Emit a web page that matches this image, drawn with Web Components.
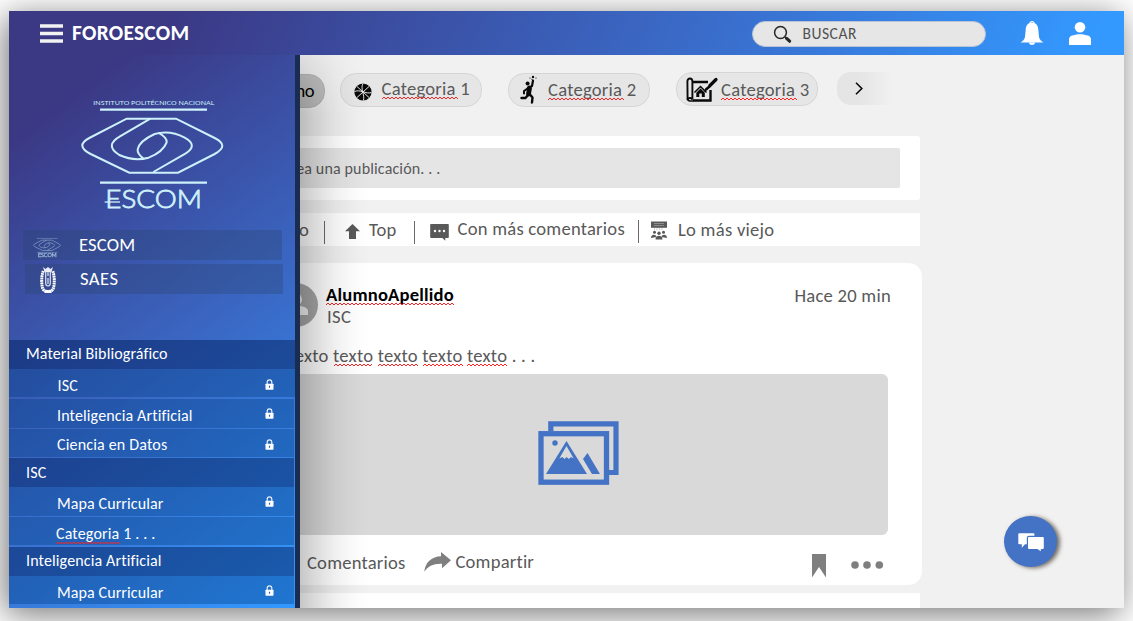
<!DOCTYPE html>
<html lang="es">
<head>
<meta charset="utf-8">
<title>FOROESCOM</title>
<style>
html,body{margin:0;height:100%;overflow:hidden;background:#fff}
body{font-family:Carlito,Calibri,Lato,sans-serif}
</style>
</head>
<body>
<foro-app></foro-app>
<script>
const define=(name,html,init)=>{
  const t=document.createElement('template');t.innerHTML=html;
  customElements.define(name,class extends HTMLElement{
    constructor(){super();this.attachShadow({mode:'open'}).append(t.content.cloneNode(true))}
    connectedCallback(){if(init)init(this,this.shadowRoot)}
  });
};

/* Single line of text fitted to a width (w), with optional spelling marks ("x:width ...") */
define('ui-text',`<style>
:host{display:block;flex:none;position:relative;line-height:20px;height:20px;white-space:pre;font-size:18.600px}
span{display:inline-block}
svg{position:absolute;top:17px;height:4px;overflow:hidden}
</style><span><slot></slot></span>`,(el,r)=>{
  const w=+el.getAttribute('w')-.6,s=r.querySelector('span'),n=el.textContent.length;
  el.style.width=(w+.6)+'px';
  const nat=s.getBoundingClientRect().width;
  s.style.letterSpacing=((w-nat)/n)+'px';
  (el.getAttribute('marks')||'').split(' ').filter(Boolean).forEach(m=>{
    const [x,l]=m.split(':').map(Number);let d='M0 3';
    for(let i=2,k=0;i<=l;i+=2,k++)d+=`L${i} ${k%2?3:1}`;
    r.innerHTML+=`<svg style="left:${x}px;width:${l}px"><path d="${d}" fill="none" stroke="#f22" stroke-width="1"/></svg>`;
  });
});

const ICONS={
menu:['0 0 23 19','<path d="M0 2h23M0 9.5h23M0 17h23" stroke="#f2f2f2" stroke-width="3.4"/>'],
search:['0 0 17 17','<circle cx="6.5" cy="6.5" r="5.9" fill="none" stroke="#262626" stroke-width="1.5"/><path d="M11 11l1.6 1.5" stroke="#262626" stroke-width="1.6"/><path d="M12.6 12.4l3 2.8" stroke="#262626" stroke-width="3.2" stroke-linecap="round"/>'],
bell:['0 0 24 24','<g fill="#fff"><circle cx="12" cy="2.5" r="2" fill="none" stroke="#fff" stroke-width="1.2"/><path d="M12 1.600c4 0 6 3 6.300 7l.7 7.500c.4 2.700 2.500 4.200 4.500 5.400H.500c2-1.200 4.100-2.700 4.500-5.400L5.700 8.600C6 4.600 8 1.600 12 1.600z"/><path d="M9 21.500h6a3 2.300 0 0 1-6 0z"/></g>'],
user:['0 0 22 23','<g fill="#fff"><circle cx="11" cy="5.300" r="5.300"/><path d="M0 23v-5.500c0-1.800 1-3 2.400-3.700C5 12.700 8 12.200 11 12.200s6 .5 8.600 1.600c1.400.7 2.400 1.900 2.400 3.700V23z"/></g>'],
ball:['0 0 18 18','<circle cx="9" cy="9" r="8.600" fill="#0a0a0a"/><path d="M3 3.500l12 11M15 3.500L3 14.500M9 .5C6 6 11 12 9.500 17.500M.500 8.500C6 6 12 11.500 17.500 9.500" fill="none" stroke="#e6e6e6" stroke-width="1"/>'],
volley:['0 0 18 29','<g fill="none" stroke="#0a0a0a" stroke-linecap="round" stroke-linejoin="round"><path d="M7.500 13.500L4 16v2.500" stroke-width="2"/><path d="M8 13l4-2 1-5.500" stroke-width="2.200"/><path d="M9.500 13L8.500 19" stroke-width="4.800"/><path d="M10 19.500l2.500 3-.5 5" stroke-width="2.400"/><path d="M8 20l-2.500 3H1.500" stroke-width="2.400"/></g><g fill="#0a0a0a"><circle cx="7.600" cy="8.600" r="2"/><circle cx="13" cy="2" r="1.200"/><circle cx="10" cy="3" r=".6"/><circle cx="16" cy="3" r=".6"/><circle cx="12" cy="4.300" r=".6"/></g>'],
plan:['0 0 32 26','<path d="M6.500 5H22M24.500 13v10.500H7" fill="none" stroke="#0a0a0a" stroke-width="2.400"/><path d="M1.400 4.500c0-4 5-4 5 0v18c-1-2-4.500-2-4.800.5z" fill="none" stroke="#0a0a0a" stroke-width="1.900"/><path d="M1.500 21.500c0 3 3 2.500 6 2.500" fill="none" stroke="#0a0a0a" stroke-width="1.700"/><path d="M8.500 15.500l6-6 6 6" fill="none" stroke="#0a0a0a" stroke-width="1.500"/><path d="M10.300 15.700l4.200-4.200 4.300 4.200V20h-3v-3.500h-2.500V20h-3z" fill="#0a0a0a"/><path d="M20 12.500l4-3.500" stroke="#0a0a0a" stroke-width="2.500"/><path d="M24 8.500l6-6" stroke="#0a0a0a" stroke-width="3.200" stroke-linecap="round"/><path d="M17 14.300c2 .4 4-.3 4.500-2l-1.500-1.300c-1.300.8-1.300 2.500-3 3.300z" fill="#0a0a0a"/>'],
next:['0 0 8 13','<path d="M1 .8l5.800 5.700L1 12.200" fill="none" stroke="#0a0a0a" stroke-width="1.600"/>'],
up:['0 0 15 15','<path d="M7.500 0L15 7.300H11V15H4V7.300H0z" fill="#595959"/>'],
comment:['0 0 19 17','<path d="M1 0h17q.8 0 .8.8v12.400q0 .8-.8.8h-2.700v2.800L12.300 14H1q-.8 0-.8-.8V.8Q.2 0 1 0z" fill="#595959"/><g fill="#fff"><circle cx="5" cy="7" r="1.200"/><circle cx="9.500" cy="7" r="1.200"/><circle cx="14" cy="7" r="1.200"/></g>'],
crowd:['0 0 16 19','<g fill="#595959"><path d="M0 .5h16v6.300H0z"/><path d="M3 8h10" stroke="#999" stroke-dasharray="1 1.500"/><circle cx="3.500" cy="11.300" r="1.500"/><circle cx="12.500" cy="11.300" r="1.500"/><circle cx="8" cy="12.300" r="1.700"/><path d="M0 17c0-4 5-4 5.500-1zM16 17c0-4-5-4-5.500-1zM4.500 18.500c0-5 7-5 7 0z"/></g><path d="M3 2.500h10M3 4.500h10" stroke="#8c8c8c"/>'],
avatar:['0 0 44 44','<circle cx="22" cy="22" r="22" fill="#a6a6a6"/><circle cx="22" cy="16.500" r="6" fill="#efefef"/><path d="M10 32v-4c0-7 24-7 24 0v4z" fill="#efefef"/>'],
photo:['0 0 81 64','<g fill="none" stroke="#4472c4"><path d="M12.800 10V2.800H78V51.500H71" stroke-width="5.200"/><rect x="3" y="12.700" width="65.500" height="48.500" stroke-width="5.300"/></g><g fill="#4472c4"><circle cx="17" cy="22" r="2.700"/><path fill-rule="evenodd" d="M8 53L28.500 20 49 53zM28.500 25l-7.200 12.500 3-1.600 2.300 2 2-2 2.200 2 2.300-2 2.600 1.600z"/><path d="M45 38l4.500-6L62 53H54z"/></g>'],
share:['0 0 27 20','<path d="M17 0l10 8.300-9 8v-4.500C9 11.500 4 14.500.300 19.700 1.300 10 8 4.500 17 4.300z" fill="#7f7f7f"/>'],
mark:['0 0 14 24','<path d="M0 0h14v23.500L7 13 0 23.500z" fill="#7f7f7f"/>'],
dots:['0 0 33 8','<g fill="#7f7f7f"><circle cx="4" cy="4" r="3.800"/><circle cx="16" cy="4" r="3.800"/><circle cx="28.300" cy="4" r="3.800"/></g>'],
chat:['0 0 26 18','<path d="M1.200.3h14.300q.9 0 .9 1v1.500H11Q8.800 2.800 8.800 5v6.300H7L3.800 14.800V11.300H1.200q-.9 0-.9-1v-9q0-1 .9-1z" fill="#fff"/><path d="M11 3.900h13.800q1 0 1 1v10q0 1-1 1H22.800V18.200L19.500 15.900H11q-1 0-1-1v-10q0-1 1-1z" fill="#fff"/>'],
lock:['0 0 9 11','<path d="M2.200 5V3.200a2.300 2.300 0 0 1 4.600 0V5" fill="none" stroke="#e8eefa" stroke-width="1.200"/><rect x=".5" y="4.700" width="8" height="6" rx=".6" fill="#fff"/><path d="M4.500 6.700v2" stroke="#2860b0" stroke-width="1.200"/>'],
shield:['0 0 16 27','<path d="M3.300 4c-2 5-2 13-.6 17.500 1.500 4 9.100 4 10.600 0 1.400-4.500 1.400-12.500-.6-17.500" fill="none" stroke="#fff" stroke-width="3" stroke-dasharray="1.800 .5"/><path d="M3 0l1.500 5h7L13 0l-2.500 2L8 0 5.500 2z" fill="#fff" opacity=".9"/><path d="M5.700 5v11c0 4 4.600 4 4.600 0V5M8 4v5M8 11v6" fill="none" stroke="#fff" stroke-width="1.200" opacity=".85"/><path d="M4.500 24.500h7" stroke="#fff" stroke-width="2.800"/>']
};
define('ui-icon',`<style>:host{display:block;flex:none}svg{display:block;width:100%;height:100%;overflow:visible}</style><svg preserveAspectRatio="none"></svg>`,(el,r)=>{
  const [vb,body]=ICONS[el.getAttribute('name')],s=r.querySelector('svg'),[, ,w,h]=vb.split(' ');
  s.setAttribute('viewBox',vb);s.innerHTML=body;
  el.style.width=(el.getAttribute('w')||w)+'px';el.style.height=(el.getAttribute('h')||h)+'px';
});

define('escom-logo',`<style>:host{display:block;flex:none}svg{display:block;width:100%;height:100%;overflow:visible}text{font-family:Lato,sans-serif;fill:#cdeffb}:host([mini]) g{stroke-width:9}:host([mini]) text{stroke-width:6}</style>
<svg viewBox="30 20 435 345" preserveAspectRatio="none"><g fill="none" stroke="#cdf1fb" stroke-width="6">
<path d="M90 58H411M90 277H411" stroke-width="6.500"/>
<path d="M170 85H318L434 143Q480 166 434 191L324 247H178L62 191Q14 166 58 143Z"/>
<path d="M241 85L150 138Q102 165 148 194Q192 214 236 202Q280 184 290 156Q292 142 265 127"/>
<path d="M250 245L346 190Q386 165 344 142Q300 118 254 131Q208 152 203 177Q201 190 222 206"/>
</g>
<text class="top" x="70" y="44" font-size="18" textLength="363" lengthAdjust="spacingAndGlyphs">INSTITUTO POLITÉCNICO NACIONAL</text>
<text x="106" y="353" font-size="76" font-weight="300" textLength="290" lengthAdjust="spacingAndGlyphs" stroke="#cdf1fb" stroke-width="2.500">ESCOM</text>
<path d="M104 335H150" stroke="#cdf1fb" stroke-width="4"/></svg>`,(el,r)=>{if(el.hasAttribute('mini'))r.querySelector('.top').remove()});

define('top-bar',`<style>
:host{display:flex;align-items:flex-start;height:44px;background:linear-gradient(112deg,#3b3884 14%,#3a6cca 62%,#3399ff 97%);position:relative;z-index:3;color:#fff}
.brand{margin:12px 0 0 9px;font-weight:700;font-size:21.300px}
.search{display:flex;width:232px;height:24px;border:1px solid #b9c4d6;border-radius:13px;background:#e6e6e6;margin:10px 0 0 561.500px;color:#505050}
.search ui-text{font-size:15.500px;margin:2px 0 0 12px}
</style>
<ui-icon name="menu" style="margin:13px 0 0 31px"></ui-icon><ui-text class="brand" w="118">FOROESCOM</ui-text>
<div class="search"><ui-icon name="search" style="margin:4px 0 0 21px"></ui-icon><ui-text w="55">BUSCAR</ui-text></div>
<ui-icon name="bell" style="margin:10px 0 0 34.500px"></ui-icon><ui-icon name="user" style="margin:11px 0 0 24.500px"></ui-icon>`);

define('nav-button',`<style>:host{display:flex;width:259px;height:30px;background:rgba(45,68,110,.34);color:#fff}</style><slot></slot>`);
define('menu-row',`<style>
:host{display:flex;justify-content:space-between;box-sizing:border-box;width:285px;height:29px;padding-right:20px;background:rgba(0,60,130,.37);color:#fff}
:host([head]){background:rgba(0,32,96,.5)}
::slotted(ui-text){font-size:16px!important;top:.6px}
</style><slot></slot>`);

define('side-drawer',`<style>
:host{display:block;position:absolute;left:0;top:44px;width:286px;height:553px;background:linear-gradient(143deg,#3b3884 11%,#3a66c2 54%,#3399ff 100%);border-right:5px solid #1a2c50;z-index:2}
:host::after{content:"";position:absolute;left:291px;top:0;width:70px;height:100%;background:linear-gradient(90deg,rgba(0,0,0,.22),rgba(0,0,0,.14) 22%,rgba(0,0,0,.06) 50%,rgba(0,0,0,.015) 78%,transparent);-webkit-mask:linear-gradient(rgba(0,0,0,.35),#000 60px)}
escom-logo.big{width:145px;height:115px;margin-left:71px}
.top{padding-top:41.500px;height:243.500px}
.nav{padding:18px 0 0 14px;display:grid;gap:4px;justify-items:start}
</style>
<div class="top"><escom-logo class="big"></escom-logo>
<div class="nav">
<nav-button><escom-logo mini style="width:28px;height:22px;margin:6px 0 0 10px;opacity:.65"></escom-logo><ui-text w="57" style="margin:5.500px 0 0 18px">ESCOM</ui-text></nav-button>
<nav-button style="margin-left:2px;width:258px"><ui-icon name="shield" style="margin:3px 0 0 15px"></ui-icon><ui-text w="39" style="margin:5.500px 0 0 24px">SAES</ui-text></nav-button>
</div></div>
<menu-row head style="width:286px"><ui-text w="142" style="margin:3px 0 0 17px">Material Bibliográfico</ui-text></menu-row>
<menu-row style="height:28px;width:286px"><ui-text w="21" style="margin:6px 0 0 48.500px">ISC</ui-text><ui-icon name="lock" style="margin:10px 1px 0 0"></ui-icon></menu-row>
<menu-row style="margin:2px 0 1px"><ui-text w="136" style="margin:6px 0 0 48px">Inteligencia Artificial</ui-text><ui-icon name="lock" style="margin:9px 0 0"></ui-icon></menu-row>
<menu-row style="height:28px"><ui-text w="111" style="margin:5px 0 0 48px">Ciencia en Datos</ui-text><ui-icon name="lock" style="margin:10px 0 0"></ui-icon></menu-row>
<menu-row head style="margin-top:1px"><ui-text w="21" style="margin:4px 0 0 17px">ISC</ui-text></menu-row>
<menu-row><ui-text w="107" style="margin:6px 0 0 48px">Mapa Curricular</ui-text><ui-icon name="lock" style="margin:9px 0 0"></ui-icon></menu-row>
<menu-row style="margin-top:1px;height:28px"><ui-text w="100" marks="0:64" style="margin:6px 0 0 47px">Categoria 1 . . .</ui-text></menu-row>
<menu-row head style="margin-top:2px"><ui-text w="136" style="margin:3px 0 0 17px">Inteligencia Artificial</ui-text></menu-row>
<menu-row style="height:28px"><ui-text w="107" style="margin:6px 0 0 48px">Mapa Curricular</ui-text><ui-icon name="lock" style="margin:9px 0 0"></ui-icon></menu-row>`);

define('category-chip',`<style>
:host{display:flex;box-sizing:border-box;width:142px;height:34px;border:1px solid #d6d6d6;border-radius:16px;background:#e6e6e6;color:#595959}
:host([active]){background:#bfbfbf;border:1.500px solid #b5b5b5;color:#000;width:84.500px}
:host([more]){border:0;width:63px;height:33px;background:linear-gradient(90deg,#e4e4e4,#e6e6e6 40%,#f1f1f1 90%);border-radius:14px}
</style><slot></slot>`);

define('post-composer',`<style>
:host{display:block;box-sizing:border-box;width:680px;height:64px;padding:12px 20px;background:#fff;border-radius:3px}
div{height:40px;background:#e5e5e5;border-radius:2px;color:#595959;padding:10.600px 0 0 22px;box-sizing:border-box}
ui-text{font-size:16px}
</style><div><ui-text w="159">Crea una publicación. . .</ui-text></div>`);

define('sort-bar',`<style>
:host{display:flex;width:680px;height:33px;background:#fff;color:#595959}
i{display:block;flex:none;width:1px;height:23px;background:#6a6a6a}
</style>
<ui-text w="10" style="margin:7px 0 0 59px">o</ui-text>
<i style="margin:8px 0 0 15px"></i><ui-icon name="up" style="margin:11px 0 0 20px"></ui-icon><ui-text w="28" style="margin:7px 0 0 9px">Top</ui-text>
<i style="margin:8px 0 0 17px"></i><ui-icon name="comment" style="margin:11px 0 0 15px"></ui-icon><ui-text w="168" style="margin:6px 0 0 8.500px">Con más comentarios</ui-text>
<i style="margin:7px 0 0 12.500px"></i><ui-icon name="crowd" style="margin:8px 0 0 12px"></ui-icon><ui-text w="97" style="margin:7px 0 0 11px">Lo más viejo</ui-text>`);

define('post-card',`<style>
:host{display:block;width:682px;height:322px;background:#fff;border-radius:3px 14px 14px 3px;color:#595959}
.head,.foot{display:flex;align-items:flex-start}
.head{height:83px}
.name{font-weight:700;color:#000}
.pic{display:flex;justify-content:center;width:648px;height:161px;border-radius:6px;background:#d9d9d9;margin-top:8px}
</style>
<div class="head"><ui-icon name="avatar" style="margin:20px 0 0 34px"></ui-icon>
<div style="margin:22px 0 0 8px;width:128px"><ui-text class="name" w="128.600" marks="0:128">AlumnoApellido</ui-text><ui-text w="25" style="margin:2px 0 0 1px">ISC</ui-text></div>
<ui-text w="97" style="margin:23px 0 0 340.500px">Hace 20 min</ui-text></div>
<ui-text w="249" marks="47:39 91:40 136:40 180:40" style="margin-left:47px">Texto texto texto texto texto . . .</ui-text>
<div class="pic"><ui-icon name="photo" style="margin:47px 0 0 28px"></ui-icon></div>
<div class="foot"><ui-text w="99" style="margin:18px 0 0 67px">Comentarios</ui-text><ui-icon name="share" style="margin:17px 0 0 18px"></ui-icon><ui-text w="79" style="margin:17px 0 0 4.500px">Compartir</ui-text>
<ui-icon name="mark" style="margin:19px 0 0 277px"></ui-icon><ui-icon name="dots" style="margin:25.500px 0 0 25px"></ui-icon></div>`);

define('chat-button',`<style>
:host{display:flex;position:absolute;left:995px;top:505px;width:53px;height:51px;border-radius:50%;background:#4472c4;box-shadow:3px 1px 4px rgba(60,50,40,.7)}
</style><ui-icon name="chat" style="margin:17px 0 0 14px"></ui-icon>`);

define('foro-app',`<style>
:host{display:block;box-sizing:border-box;padding:11px 9px 13px;width:1133px;height:621px}
.frame{position:relative;width:1115px;height:597px;box-shadow:-4px 6px 32px rgba(0,0,0,.55)}
.clip{position:relative;width:100%;height:100%;overflow:hidden;background:#f1f1f1}
main{padding:17px 0 0 231px}
.chips{display:flex;align-items:flex-start;height:64px}
sort-bar{margin:13px 0 17px}
.next{width:680px;height:40px;background:#fff;margin-top:8px}
</style>
<div class="frame"><div class="clip">
<top-bar></top-bar>
<main>
<div class="chips">
<category-chip active style="margin-top:2px"><ui-text w="19" style="margin:6px 0 0 54.500px">no</ui-text></category-chip>
<category-chip style="margin:1px 0 0 15.500px"><ui-icon name="ball" style="margin:9px 0 0 12.500px"></ui-icon><ui-text w="89" marks="0:76" style="margin:5px 0 0 10px">Categoria 1</ui-text></category-chip>
<category-chip style="margin:1px 0 0 26px"><ui-icon name="volley" style="margin:1px 0 0 11px"></ui-icon><ui-text w="89" marks="0:76" style="margin:6px 0 0 10px">Categoria 2</ui-text></category-chip>
<category-chip style="margin:0 0 0 26px"><ui-icon name="plan" style="margin:4px 0 0 9px"></ui-icon><ui-text w="89" marks="0:76" style="margin:7px 0 0 3px">Categoria 3</ui-text></category-chip>
<category-chip more style="margin:0 0 0 19px"><ui-icon name="next" style="margin:10px 0 0 17.500px"></ui-icon></category-chip>
</div>
<post-composer></post-composer>
<sort-bar></sort-bar>
<post-card></post-card>
<div class="next"></div>
</main>
<side-drawer></side-drawer>
<chat-button></chat-button>
</div></div>`);
</script>
</body>
</html>
